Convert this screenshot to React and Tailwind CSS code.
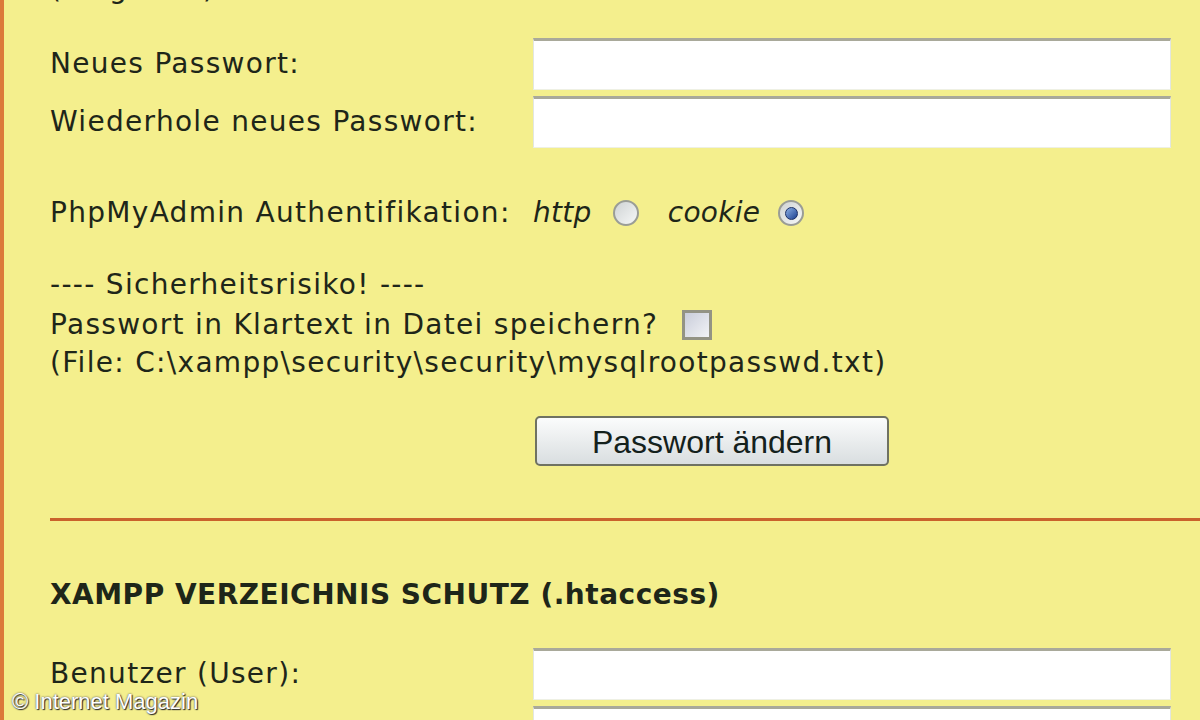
import React from 'react';

const TextInput = () => (
  <div className="w-[638px] h-[52px] bg-white border-t-[3px] border-t-[#a9a99a] border-x border-x-[#e2e6e0] border-b border-b-[#eef0e4]" />
);

const Row = ({ label, className = '' }) => (
  <div className={`flex items-center ${className}`}>
    <div className="w-[483px]">{label}</div>
    <TextInput />
  </div>
);

const Radio = ({ checked }) => (
  <span className="flex items-center justify-center w-[26px] h-[26px] rounded-full border-2 border-[#9a9d96] bg-gradient-to-br from-[#cfd3d4] to-[#f6f8f8]">
    {checked && (
      <span className="w-[13px] h-[13px] rounded-full bg-gradient-to-br from-[#8fb2e6] to-[#1d3f8f] border border-[#1a2f66]" />
    )}
  </span>
);

const App = () => {
  return (
    <div
      className="w-[1200px] h-[720px] overflow-hidden relative bg-[#f4ef8d] border-l-[4px] border-l-[#dc7a3a] text-[28px] tracking-[1.3px] text-[#1e2619]"
      style={{ fontFamily: '"DejaVu Sans", Verdana, sans-serif' }}
    >
      <div className="pl-[46px]">
        {/* cut-off line at top */}
        <div className="h-[38px] -mt-[30px] leading-[38px]">(eingeben)</div>

        <Row label="Neues Passwort:" className="mt-[30px]" />
        <Row label="Wiederhole neues Passwort:" className="mt-[6px]" />

        <div className="flex items-center mt-[45px] h-[40px]">
          <div className="w-[483px]">PhpMyAdmin Authentifikation:</div>
          <span className="italic tracking-[0.3px]">http</span>
          <span className="ml-[21px] flex items-center"><Radio /></span>
          <span className="italic tracking-[0.3px] ml-[29px]">cookie</span>
          <span className="ml-[18px] flex items-center"><Radio checked /></span>
        </div>

        <div className="mt-[32px] leading-[40px]">
          <div>---- Sicherheitsrisiko! ----</div>
          <div className="flex items-center">
            <span>Passwort in Klartext in Datei speichern?</span>
            <span className="ml-[24px] w-[30px] h-[30px] border-[3px] border-[#939384] bg-gradient-to-br from-[#c9cdda] to-[#f2f3f6]" />
          </div>
          <div className="-mt-[2px]">(File: C:\xampp\security\security\mysqlrootpasswd.txt)</div>
        </div>

        <div className="pl-[485px] mt-[33px]">
          <button
            className="w-[354px] h-[50px] rounded-[5px] border-2 border-[#6f7262] bg-gradient-to-b from-[#fbfcfc] to-[#d9dee0] text-[32px] tracking-normal text-[#14211c]"
            style={{ fontFamily: '"Liberation Sans", Arial, sans-serif' }}
          >
            Passwort ändern
          </button>
        </div>

        <div className="mt-[52px] h-[3px] bg-[#c9622b]" />

        <div className="mt-[54px] font-bold tracking-[0.5px] leading-[40px]">XAMPP VERZEICHNIS SCHUTZ (.htaccess)</div>

        <Row label="Benutzer (User):" className="mt-[33px]" />
        <Row label="Passwort:" className="mt-[6px]" />
      </div>

      <div
        className="absolute left-[8px] top-[685px] text-[22px] tracking-normal text-white"
        style={{ fontFamily: '"Liberation Sans", Arial, sans-serif', textShadow: '0 0 2px #333, 1px 1px 1px #222, 0 0 1px #fff' }}
      >
        © Internet Magazin
      </div>
    </div>
  );
};

export default App;
